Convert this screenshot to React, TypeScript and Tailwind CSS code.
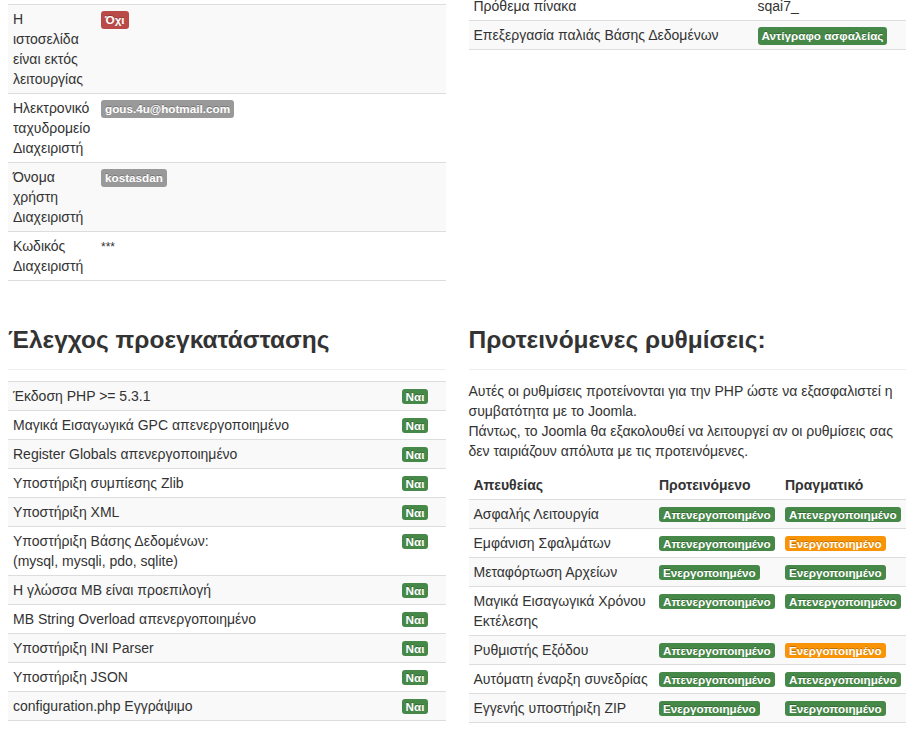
type Tone = 'success' | 'important' | 'warning' | 'muted';

const toneBg: Record<Tone, string> = {
  success: 'bg-[#468847]',
  important: 'bg-[#b94a48]',
  warning: 'bg-[#f89406]',
  muted: 'bg-[#999999]',
};

function Label({ tone, tall, children }: { tone: Tone; tall?: boolean; children: React.ReactNode }) {
  return (
    <span
      className={`${toneBg[tone]} ${
        tall ? 'leading-[14px] py-[2px]' : 'leading-[13px] py-px'
      } inline-block align-baseline rounded-[3px] px-1 text-[11.7px] font-bold text-white whitespace-nowrap [text-shadow:0_-1px_0_rgba(0,0,0,0.25)]`}
    >
      {children}
    </span>
  );
}

const siteRows = [
  { name: 'Η ιστοσελίδα είναι εκτός λειτουργίας', value: <Label tone="important" tall>Όχι</Label> },
  { name: 'Ηλεκτρονικό ταχυδρομείο Διαχειριστή', value: <Label tone="muted" tall>gous.4u@hotmail.com</Label> },
  { name: 'Όνομα χρήστη Διαχειριστή', value: <Label tone="muted" tall>kostasdan</Label> },
  { name: 'Κωδικός Διαχειριστή', value: <span className="text-[12px]">***</span> },
];

const dbRows = [
  { name: 'Πρόθεμα πίνακα', value: <span>sqai7_</span> },
  { name: 'Επεξεργασία παλιάς Βάσης Δεδομένων', value: <Label tone="success" tall>Αντίγραφο ασφαλείας</Label> },
];

const checks = [
  'Έκδοση PHP >= 5.3.1',
  'Μαγικά Εισαγωγικά GPC απενεργοποιημένο',
  'Register Globals απενεργοποιημένο',
  'Υποστήριξη συμπίεσης Zlib',
  'Υποστήριξη XML',
  'Υποστήριξη Βάσης Δεδομένων:\n(mysql, mysqli, pdo, sqlite)',
  'Η γλώσσα MB είναι προεπιλογή',
  'MB String Overload απενεργοποιημένο',
  'Υποστήριξη INI Parser',
  'Υποστήριξη JSON',
  'configuration.php Εγγράψιμο',
];

const OFF = 'Απενεργοποιημένο';
const ON = 'Ενεργοποιημένο';

const settings = [
  { name: 'Ασφαλής Λειτουργία', rec: OFF, act: OFF },
  { name: 'Εμφάνιση Σφαλμάτων', rec: OFF, act: ON, warn: true },
  { name: 'Μεταφόρτωση Αρχείων', rec: ON, act: ON },
  { name: 'Μαγικά Εισαγωγικά Χρόνου Εκτέλεσης', rec: OFF, act: OFF },
  { name: 'Ρυθμιστής Εξόδου', rec: OFF, act: ON, warn: true },
  { name: 'Αυτόματη έναρξη συνεδρίας', rec: OFF, act: OFF },
  { name: 'Εγγενής υποστήριξη ZIP', rec: ON, act: ON },
];

const stripe = (i: number) => (i % 2 === 0 ? 'bg-[#f9f9f9]' : '');
const cell = 'border-t border-[#dddddd] px-[5px] py-1 align-top text-left';

function Heading({ children }: { children: React.ReactNode }) {
  return (
    <>
      <h3 className="text-[24.5px] font-bold leading-[40px] text-[#333333]">{children}</h3>
      <hr className="mt-[9px] mb-[10px] border-t border-b border-t-[#eeeeee] border-b-white" />
    </>
  );
}

export default function App() {
  return (
    <div className="min-h-[754px] bg-white pl-2 pr-[12px] font-['Liberation_Sans',Arial,sans-serif] text-[14px] leading-[20px] text-[#333333]">
      <div className="flex items-start gap-[23px]">
        <table className="mt-[4px] w-[438px] border-b border-[#dddddd]">
          <tbody>
            {siteRows.map((r, i) => (
              <tr key={r.name} className={stripe(i)}>
                <td className={`${cell} w-[88px]`}>{r.name}</td>
                <td className={cell}>{r.value}</td>
              </tr>
            ))}
          </tbody>
        </table>
        <table className="-mt-[9px] w-[438px] border-b border-[#dddddd]">
          <tbody>
            {dbRows.map((r, i) => (
              <tr key={r.name} className={i === 1 ? 'bg-[#f9f9f9]' : ''}>
                <td className={`${cell} w-[284px]`}>{r.name}</td>
                <td className={cell}>{r.value}</td>
              </tr>
            ))}
          </tbody>
        </table>
      </div>

      <div className="mt-[39px] flex items-start gap-[23px]">
        <div className="w-[438px]">
          <Heading>Έλεγχος προεγκατάστασης</Heading>
          <table className="w-full border-b border-[#dddddd]">
            <tbody>
              {checks.map((c, i) => (
                <tr key={c} className={stripe(i)}>
                  <td className={`${cell} whitespace-pre-line`}>{c}</td>
                  <td className={`${cell} w-[49px]`}>
                    <Label tone="success">Ναι</Label>
                  </td>
                </tr>
              ))}
            </tbody>
          </table>
        </div>

        <div className="w-[438px]">
          <Heading>Προτεινόμενες ρυθμίσεις:</Heading>
          <p className="mb-[10px]">
            Αυτές οι ρυθμίσεις προτείνονται για την PHP ώστε να εξασφαλιστεί η συμβατότητα με το Joomla.
            <br />
            Πάντως, το Joomla θα εξακολουθεί να λειτουργεί αν οι ρυθμίσεις σας δεν ταιριάζουν απόλυτα με τις
            προτεινόμενες.
          </p>
          <table className="w-full border-b border-[#dddddd]">
            <thead>
              <tr>
                <th className="w-[186px] px-[5px] py-1 text-left font-bold">Απευθείας</th>
                <th className="w-[126px] px-[5px] py-1 text-left font-bold">Προτεινόμενο</th>
                <th className="w-[126px] px-[5px] py-1 text-left font-bold">Πραγματικό</th>
              </tr>
            </thead>
            <tbody>
              {settings.map((s, i) => (
                <tr key={s.name} className={stripe(i)}>
                  <td className={cell}>{s.name}</td>
                  <td className={cell}>
                    <Label tone="success">{s.rec}</Label>
                  </td>
                  <td className={cell}>
                    <Label tone={s.warn ? 'warning' : 'success'}>{s.act}</Label>
                  </td>
                </tr>
              ))}
            </tbody>
          </table>
        </div>
      </div>
    </div>
  );
}
